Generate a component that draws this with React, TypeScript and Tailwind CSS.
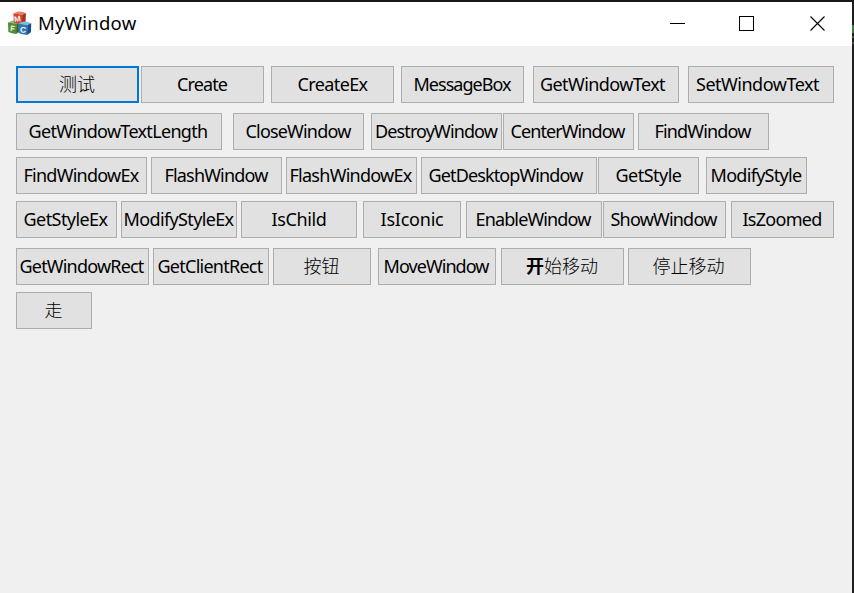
import { useLayoutEffect, useRef, useState } from "react";

type Item = { label: string; box: string; text: number; cjk?: boolean; focus?: boolean };

const rows: { top: string; items: Item[] }[] = [
  {
    top: "mt-5",
    items: [
      { label: "测试", box: "w-[123px] pr-px", text: 36, cjk: true, focus: true },
      { label: "Create", box: "w-[123px] ml-[2px] pr-px", text: 50 },
      { label: "CreateEx", box: "w-[123px] ml-[7px]", text: 70 },
      { label: "MessageBox", box: "w-[123px] ml-[7px] pr-px", text: 97 },
      { label: "GetWindowText", box: "w-[146px] ml-[9px] pr-[7px]", text: 125 },
      { label: "SetWindowText", box: "w-[146px] ml-[9px] pr-[7px]", text: 123 },
    ],
  },
  {
    top: "mt-[10px]",
    items: [
      { label: "GetWindowTextLength", box: "w-[206px] pr-[2px]", text: 179 },
      { label: "CloseWindow", box: "w-[131px] ml-[11px] pr-px", text: 105 },
      { label: "DestroyWindow", box: "w-[131px] ml-[7px] pr-px", text: 122 },
      { label: "CenterWindow", box: "w-[131px] ml-px pr-[2px]", text: 114 },
      { label: "FindWindow", box: "w-[131px] ml-[4px] pr-[2px]", text: 96 },
    ],
  },
  {
    top: "mt-[7px]",
    items: [
      { label: "FindWindowEx", box: "w-[131px] pr-px", text: 115 },
      { label: "FlashWindow", box: "w-[131px] ml-[4px] pr-px", text: 103 },
      { label: "FlashWindowEx", box: "w-[131px] ml-[4px] pr-[2px]", text: 122 },
      { label: "GetDesktopWindow", box: "w-[176px] ml-[4px] pr-[7px]", text: 154 },
      { label: "GetStyle", box: "w-[101px] ml-px", text: 66 },
      { label: "ModifyStyle", box: "w-[101px] ml-[7px] pr-px", text: 91 },
    ],
  },
  {
    top: "mt-[7px]",
    items: [
      { label: "GetStyleEx", box: "w-[101px] pr-[2px]", text: 84 },
      { label: "ModifyStyleEx", box: "w-[116px] ml-[4px] pr-px", text: 110 },
      { label: "IsChild", box: "w-[116px] ml-[4px]", text: 55 },
      { label: "IsIconic", box: "w-[98px] ml-[6px]", text: 63 },
      { label: "EnableWindow", box: "w-[136px] ml-[5px] pr-[2px]", text: 115 },
      { label: "ShowWindow", box: "w-[123px] ml-px pr-[2px]", text: 106 },
      { label: "IsZoomed", box: "w-[103px] ml-[5px] pr-px", text: 79 },
    ],
  },
  {
    top: "mt-[10px]",
    items: [
      { label: "GetWindowRect", box: "w-[133px] pr-[2px]", text: 124 },
      { label: "GetClientRect", box: "w-[116px] ml-[4px] pr-[2px]", text: 105 },
      { label: "按钮", box: "w-[98px] ml-[4px] pr-px", text: 36, cjk: true },
      { label: "MoveWindow", box: "w-[118px] ml-[7px] pr-[2px]", text: 105 },
      { label: "开始移动", box: "w-[123px] ml-[5px] pr-px", text: 72, cjk: true },
      { label: "停止移动", box: "w-[123px] ml-[4px] pr-[2px]", text: 72, cjk: true },
    ],
  },
  { top: "mt-[7px]", items: [{ label: "走", box: "w-[76px] pr-px", text: 18, cjk: true }] },
];

function Caption({ label, width }: { label: string; width: number }) {
  const ref = useRef<HTMLSpanElement>(null);
  const [spacing, setSpacing] = useState(0);
  useLayoutEffect(() => {
    const el = ref.current;
    if (el) setSpacing((width - el.getBoundingClientRect().width) / label.length);
  }, []);
  return (
    <span ref={ref} className="inline-block shrink-0 whitespace-nowrap" style={{ letterSpacing: `${spacing}px` }}>
      {label}
    </span>
  );
}

function PushButton({ item }: { item: Item }) {
  return (
    <button
      type="button"
      className={`flex h-[37px] shrink-0 items-center justify-center bg-[#e1e1e1] text-[18px] leading-[24px] text-black ${
        item.focus ? "border-2 border-[#0078d7]" : "border border-[#adadad]"
      } ${
        item.cjk
          ? "pb-[3px] font-['Noto_Sans_CJK_SC',sans-serif] font-light"
          : "pb-[2px] font-['Noto_Sans','Liberation_Sans',sans-serif]"
      } ${item.box}`}
    >
      {item.label === "开始移动" ? (
        <span>
          <b className="font-bold">开</b>始移动
        </span>
      ) : item.cjk ? (
        <span>{item.label}</span>
      ) : (
        <Caption label={item.label} width={item.text} />
      )}
    </button>
  );
}

type CubeProps = { move: string; top: string; front: string; side: string; letter: string; tilt: string };

function Cube({ move, top, front, side, letter, tilt }: CubeProps) {
  return (
    <g transform={move}>
      <path d="M0 2 Q4 0.2 5.5 0 Q10 0.4 12.5 1.6 L8.8 3.4 Z" fill={top} />
      <path d="M0 2 L8.9 3.3 L8.6 13.4 Q4 13 0.4 11.4 Z" fill={front} />
      <path d="M8.8 3.4 L12.5 1.6 L12.2 10.6 L8.5 13.4 Z" fill={side} />
      <text transform={tilt} textAnchor="middle" fontSize="8" fontWeight="700" fontFamily="Liberation Sans, sans-serif" fill="#f4f4ee">
        {letter}
      </text>
    </g>
  );
}

export default function App() {
  return (
    <div className="flex h-[593px] w-[854px] overflow-hidden border-t-2 border-[#1b1819] bg-[#1e1e1f]">
      <div className="flex w-[852px] flex-col bg-[#f0f0f0]">
        <header className="flex h-[44px] shrink-0 items-center bg-white">
          <svg className="ml-[8px] h-[26px] w-[24px] shrink-0" viewBox="0 0 24 26">
            <Cube move="translate(0 9.5) scale(0.95 1)" top="#8fc06a" front="#4f8c32" side="#2f641d" letter="F" tilt="translate(4.4 10.8) rotate(6)" />
            <Cube move="translate(5.4 0.4) scale(1 0.98)" top="#ec7c62" front="#d24431" side="#ac2c1f" letter="M" tilt="translate(4.4 10.4) rotate(-8)" />
            <Cube move="translate(10 10.6) scale(1.06 1)" top="#7fbde3" front="#2f79b6" side="#1a4f88" letter="C" tilt="translate(4.6 11) rotate(6)" />
          </svg>
          <h1 className="ml-[6px] pb-[3px] font-['Noto_Sans','Open_Sans',sans-serif] text-[18.5px] leading-[24px] text-black">
            <Caption label="MyWindow" width={98.5} />
          </h1>
          <svg className="ml-auto h-[44px] w-[212px] shrink-0" viewBox="0 0 212 44" fill="none" stroke="#000" shapeRendering="crispEdges">
            <path d="M30 21.5 H45" />
            <rect x="99.5" y="14.5" width="14" height="14" />
            <path d="M170.5 14.5 L184.5 28.5 M184.5 14.5 L170.5 28.5" shapeRendering="auto" strokeWidth="1.1" />
          </svg>
        </header>
        <main className="flex flex-col pl-4">
          {rows.map((row) => (
            <div key={row.items[0].label} className={`flex ${row.top}`}>
              {row.items.map((item) => (
                <PushButton key={item.label} item={item} />
              ))}
            </div>
          ))}
        </main>
      </div>
      <div className="flex w-[2px] flex-col pt-[23px]">
        <div className="h-[8px] bg-[#3f7d3c]" />
        <div className="mt-[3px] h-[2px] bg-[#356335]" />
        <div className="mt-[4px] h-[2px] bg-[#356335]" />
      </div>
    </div>
  );
}
